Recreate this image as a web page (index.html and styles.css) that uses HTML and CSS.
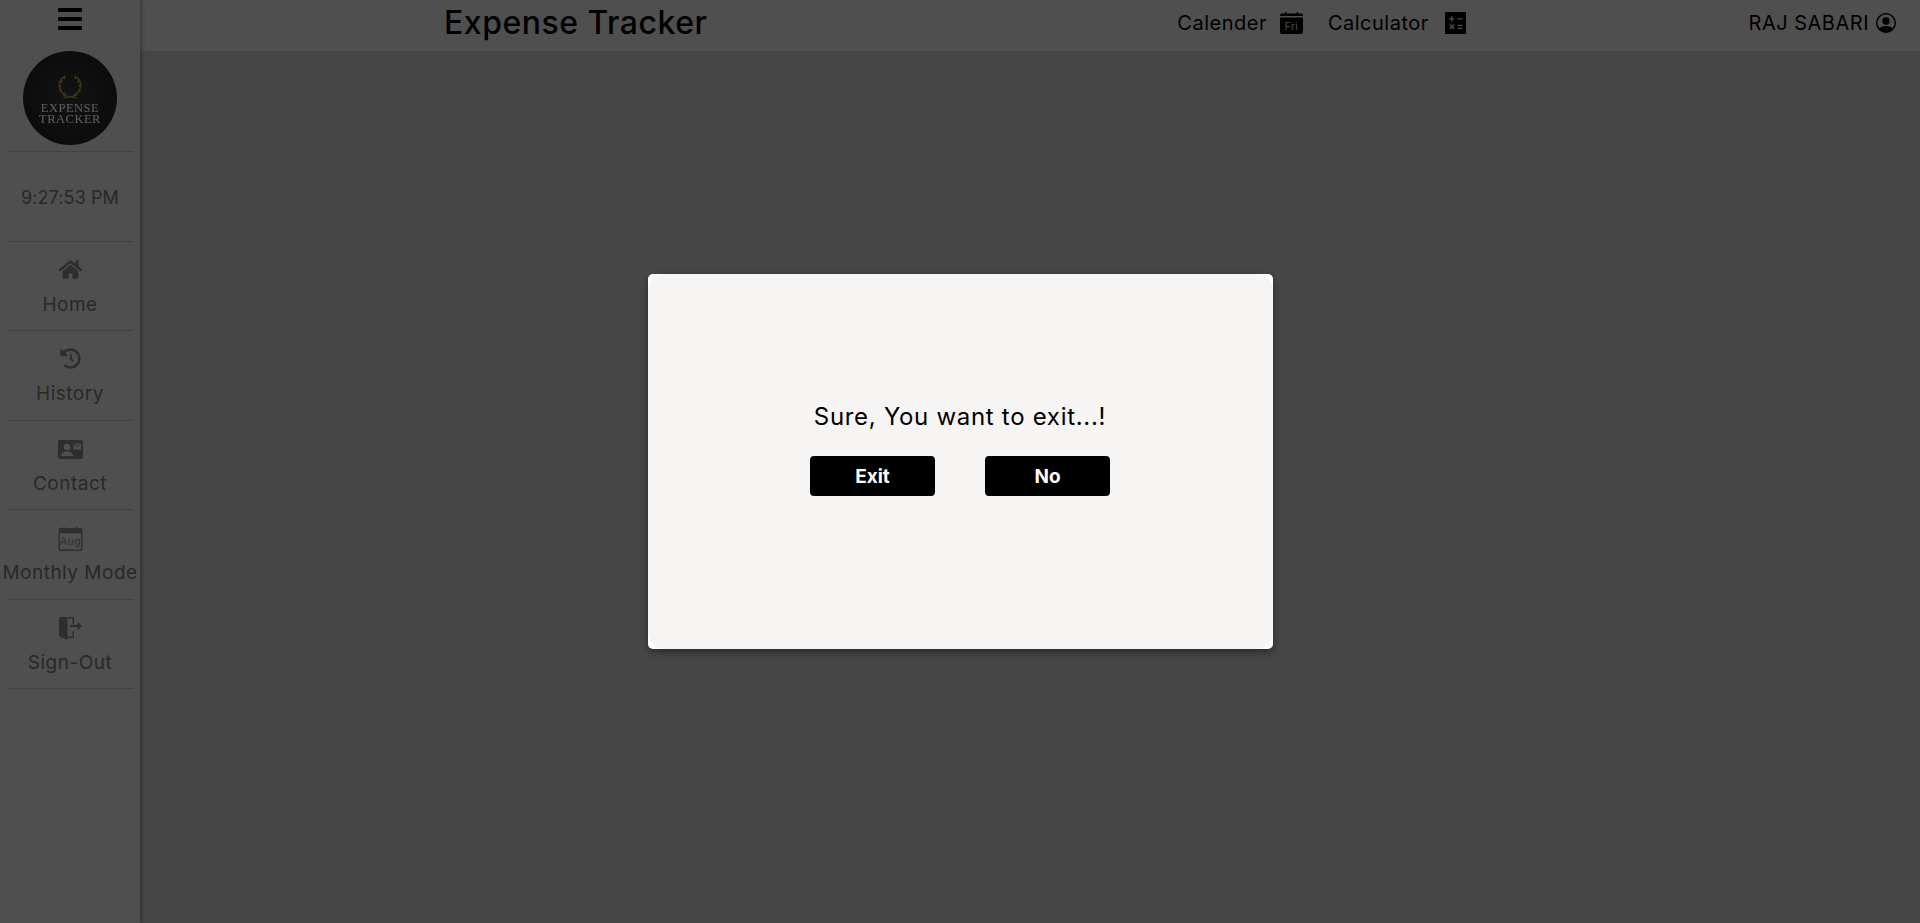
FILE: index.html
```html
<!DOCTYPE html>
<html lang="en">

<head>
    <meta charset="UTF-8">
    <meta name="viewport" content="width=device-width, initial-scale=1.0">
    <title>Expense Tracker</title>
    <link rel="stylesheet" href="styles.css">
</head>

<body>
    <div class="app">
        <aside class="sidebar">
            <div class="menu-btn">
                <svg class="bars" viewBox="0 0 24 22" aria-hidden="true">
                    <rect x="0" y="0" width="24" height="4" rx="1"/>
                    <rect x="0" y="9" width="24" height="4" rx="1"/>
                    <rect x="0" y="18" width="24" height="4" rx="1"/>
                </svg>
            </div>
            <div class="logo-wrap">
                <div class="logo">
                    <svg class="wreath" viewBox="1.500 0 23 24" preserveAspectRatio="none" aria-hidden="true">
                        <path d="M6.500 2C1.500 8 3 18 11 21.500M19.500 2C24.500 8 23 18 15 21.500M7 23L19 20.500M19 23L7 20.500" fill="none" stroke="#43361a" stroke-width="1"/>
                        <path d="M6 3l3-3-.5 4.500zM3.500 7L6 3.500 6.500 8zM2.500 12L4 8l1.500 4zM4 17l-.5-4 3 3zM8 20.500l-3-3 4 .5zM20 3l-3-3 .5 4.500zM22.500 7L20 3.500 19.500 8zM23.500 12L22 8l-1.500 4zM22 17l.5-4-3 3zM18 20.500l3-3-4 .5z" fill="#43361a"/>
                    </svg>
                    <span class="logo-text">EXPENSE</span>
                    <span class="logo-text">TRACKER</span>
                </div>
            </div>
            <div class="clock">9:27:53 PM</div>
            <nav class="side-nav">
                <a class="side-item">
                    <span class="side-icon">
                        <svg class="icon-home" viewBox="0 0 576 512" aria-hidden="true">
                            <path d="M280.370 148.260L96 300.110V464a16 16 0 0 0 16 16l112.060-.29a16 16 0 0 0 15.920-16V368a16 16 0 0 1 16-16h64a16 16 0 0 1 16 16v95.640a16 16 0 0 0 16 16.050L464 480a16 16 0 0 0 16-16V300L295.670 148.260a12.190 12.190 0 0 0-15.300 0zM571.600 251.470L488 182.560V44.050a12 12 0 0 0-12-12h-56a12 12 0 0 0-12 12v72.610L318.470 43a48 48 0 0 0-61 0L4.340 251.470a12 12 0 0 0-1.600 16.900l25.500 31A12 12 0 0 0 45.150 301l235.220-193.740a12.190 12.190 0 0 1 15.300 0L530.900 301a12 12 0 0 0 16.900-1.600l25.500-31a12 12 0 0 0-1.700-16.930z"/>
                        </svg>
                    </span>
                    <span>Home</span>
                </a>
                <a class="side-item">
                    <span class="side-icon">
                        <svg class="icon-history" viewBox="0 0 512 512" aria-hidden="true">
                            <path d="M504 255.531c.253 136.640-111.180 248.372-247.820 248.468-59.015.042-113.223-20.530-155.822-54.911-11.077-8.940-11.905-25.541-1.839-35.607l11.267-11.267c8.609-8.609 22.353-9.551 31.891-1.984C173.062 425.135 212.781 440 256 440c101.705 0 184-82.311 184-184 0-101.705-82.311-184-184-184-48.814 0-93.149 18.969-126.068 49.932l50.754 50.754c10.080 10.080 2.941 27.314-11.313 27.314H24c-8.837 0-16-7.163-16-16V38.627c0-14.254 17.234-21.393 27.314-11.314l49.372 49.372C129.209 31.084 189.552 8 256 8c136.810 0 247.747 110.780 248 247.531zm-180.912 78.784l11.314-11.314c6.248-6.248 6.248-16.379 0-22.627L288 254.059V152c0-8.837-7.163-16-16-16h-16c-8.837 0-16 7.163-16 16v122.059l55.687 55.686c6.248 6.248 16.379 6.248 22.627.001z"/>
                        </svg>
                    </span>
                    <span>History</span>
                </a>
                <a class="side-item">
                    <span class="side-icon icon-low">
                        <svg class="icon-contact" viewBox="0 0 25 19" aria-hidden="true">
                            <path fill-rule="evenodd" d="M2 0h21a2 2 0 0 1 2 2v15a2 2 0 0 1-2 2H2a2 2 0 0 1-2-2V2a2 2 0 0 1 2-2zm13.500 3.500v6H23v-6z"/>
                            <circle class="cut" cx="9" cy="7" r="3.200"/>
                            <path class="cut" d="M3 16c0-3 2.500-4.500 6-4.500s6 1.500 6 4.500z"/>
                            <path d="M16 4l3.200 2.500L22.500 4" fill="none" stroke="#949494" stroke-width="1"/>
                        </svg>
                    </span>
                    <span>Contact</span>
                </a>
                <a class="side-item">
                    <span class="side-icon">
                        <svg class="icon-month" viewBox="0 0 25 25" aria-hidden="true">
                            <path fill-rule="evenodd" d="M2 1h3V0h1.500v1h12V0H20v1h3a2 2 0 0 1 2 2v20a2 2 0 0 1-2 2H2a2 2 0 0 1-2-2V3a2 2 0 0 1 2-2zm-.500 5.500v16c0 .6.400 1 1 1h20c.6 0 1-.4 1-1v-16z"/>
                            <text class="month" x="12.500" y="18.500" text-anchor="middle">Aug</text>
                        </svg>
                    </span>
                    <span>Monthly Mode</span>
                </a>
                <a class="side-item">
                    <span class="side-icon">
                        <svg class="icon-door" viewBox="0 0 23 23" aria-hidden="true">
                            <path d="M0 1.500L1 0h7.500v23L1 20 0 19z"/>
                            <path d="M8.500 0H15v7h-1.500V1.500h-5zM8.500 19.500h5V14H15v7H8.500z"/>
                            <path d="M11 7.700h7.500V4.500L23 9l-4.500 4.500v-3.200H11z"/>
                        </svg>
                    </span>
                    <span>Sign-Out</span>
                </a>
            </nav>
        </aside>

        <div class="page">
            <header class="topbar">
                <h1 class="brand">Expense Tracker</h1>
                <div class="tools">
                    <a class="tool">
                        <span>Calender</span>
                        <svg class="tool-cal" viewBox="0 0 23 22" aria-hidden="true">
                            <path fill-rule="evenodd" d="M2 1.500h3V0h1.500v1.500h10V0H18v1.500h3a2 2 0 0 1 2 2V4H0v-.500a2 2 0 0 1 2-2zM0 5.500h23V20a2 2 0 0 1-2 2H2a2 2 0 0 1-2-2z"/>
                            <text class="day" x="11.500" y="18" text-anchor="middle">Fri</text>
                        </svg>
                    </a>
                    <a class="tool">
                        <span>Calculator</span>
                        <svg class="tool-calc" viewBox="0 0 21 22" aria-hidden="true">
                            <path fill-rule="evenodd" d="M0 0h21v22H0zM6 4.200v2H4v1.400h2v2h1.400v-2h2V6.200h-2v-2zM12.500 6.200v1.400h5V6.200zM4.500 13l1.600 1.800-1.600 1.800 1 .9 1.600-1.700 1.500 1.700 1-.9-1.600-1.800L9.600 13l-1-.9-1.500 1.700-1.600-1.700zM12.500 12.700v1.400h5v-1.400zM12.500 15.700v1.400h5v-1.400z"/>
                        </svg>
                    </a>
                </div>
                <div class="user">
                    <span>RAJ SABARI</span>
                    <svg class="user-icon" viewBox="0 0 20 20" aria-hidden="true">
                        <path fill-rule="evenodd" d="M10 0a10 10 0 1 0 0 20 10 10 0 0 0 0-20zm0 1.600a8.400 8.400 0 0 1 6.500 13.700C15 13.800 12.700 13 10 13s-5 .8-6.500 2.300A8.400 8.400 0 0 1 10 1.600z"/>
                        <circle cx="10" cy="8" r="3.700"/>
                    </svg>
                </div>
            </header>
            <main class="content"></main>
        </div>
    </div>

    <div class="overlay">
        <div class="dialog">
            <div class="dialog-inner">
                <p class="dialog-msg">Sure, You want to exit...!</p>
                <div class="dialog-actions">
                    <button class="btn" type="button">Exit</button>
                    <button class="btn" type="button">No</button>
                </div>
            </div>
        </div>
    </div>
</body>

</html>
```

FILE: styles.css
```css
* {
    box-sizing: border-box;
}

html,
body {
    height: 100%;
    margin: 0;
    overflow: hidden;
}

body {
    background-color: #e2e2e2;
    color: #000;
    font-family: Inter, "Open Sans", "Liberation Sans", sans-serif;
}

.app {
    display: flex;
    height: 100%;
}

.sidebar {
    background-color: #ffffff;
    box-shadow: 2px 0 4px rgba(0, 0, 0, 0.3);
    flex: 0 0 140px;
    min-width: 0;
    position: relative;
}

.menu-btn {
    display: flex;
    height: 51px;
    justify-content: center;
    padding-top: 8px;
}

.bars {
    fill: #000;
    height: 22px;
    width: 24px;
}

.logo-wrap {
    border-bottom: 1px solid #d6d6d6;
    display: flex;
    height: 101px;
    justify-content: center;
    margin: 0 7px;
}

/* logo stays bright through the dialog overlay, same as the real app */
.logo {
    align-items: center;
    background-color: #050505;
    background-image: radial-gradient(circle, #131313 0%, #090909 100%);
    border-radius: 50%;
    display: flex;
    filter: blur(0.4px);
    flex-direction: column;
    height: 94px;
    padding-top: 24px;
    position: relative;
    width: 94px;
    z-index: 11;
}

.wreath {
    height: 24px;
    margin-bottom: 4px;
    width: 26px;
}

.logo-text {
    color: #626262;
    font-family: "Liberation Serif", serif;
    font-size: 12.5px;
    letter-spacing: 0.5px;
    line-height: 11px;
}

.clock {
    align-items: center;
    border-bottom: 1px solid #d6d6d6;
    color: #828282;
    display: flex;
    font-size: 18px;
    height: 89.5px;
    justify-content: center;
    letter-spacing: 0.1px;
    margin: 0 7px;
    padding-top: 2px;
}

.side-item {
    align-items: center;
    border-bottom: 1px solid #d6d6d6;
    color: #828282;
    display: flex;
    flex-direction: column;
    font-size: 19px;
    height: 89.6px;
    letter-spacing: 0.5px;
    line-height: 24px;
    margin: 0 7px;
    padding-top: 17px;
    white-space: nowrap;
}

.side-icon {
    display: block;
    flex: 0 0 25px;
    margin-bottom: 9px;
}

.icon-low {
    padding-top: 2px;
}

.side-icon svg {
    display: block;
    fill: #949494;
}

.icon-home {
    height: 21px;
    width: 25px;
}

.icon-history {
    height: 21px;
    width: 21px;
}

.icon-contact {
    height: 19px;
    width: 25px;
}

.icon-month {
    height: 24px;
    width: 25px;
}

.icon-door {
    height: 23px;
    width: 23px;
}

.side-icon .cut {
    fill: #fff;
}

.side-icon .month {
    fill: #949494;
    font-size: 11px;
}

.page {
    display: flex;
    flex: 1;
    flex-direction: column;
    min-width: 0;
}

.topbar {
    align-items: center;
    background-color: #fff;
    border-bottom: 1px solid #dcdcdc;
    display: flex;
    flex: 0 0 52px;
    padding-bottom: 6px;
    padding-left: 304px;
    padding-right: 24px;
}

.brand {
    font-size: 32px;
    font-weight: 500;
    letter-spacing: 0.5px;
    margin: 0;
}

.tools {
    align-items: center;
    display: flex;
    gap: 25px;
    margin-left: 470px;
}

.tool,
.user {
    align-items: center;
    display: flex;
    font-size: 20px;
    letter-spacing: 0.5px;
}

.tool svg {
    fill: #000;
    margin-left: 13px;
}

.tool-cal {
    height: 22px;
    width: 23px;
}

.tool .tool-calc {
    height: 22px;
    margin-left: 16px;
    width: 21px;
}

.tool .day {
    fill: #fff;
    font-size: 10px;
}

.user {
    margin-left: auto;
}

.user-icon {
    fill: #000;
    height: 20px;
    margin-left: 7px;
    width: 20px;
}

.content {
    flex: 1;
}

.overlay {
    align-items: center;
    background-color: rgba(0, 0, 0, 0.69);
    display: flex;
    inset: 0;
    justify-content: center;
    position: fixed;
    z-index: 10;
}

.dialog {
    background-color: #fff;
    border-radius: 5px;
    box-shadow: 0 3px 8px rgba(0, 0, 0, 0.45);
    height: 375px;
    width: 625px;
}

.dialog-inner {
    align-items: center;
    background-color: #f7f5f3;
    border-radius: 16px;
    display: flex;
    flex-direction: column;
    height: 100%;
    padding-top: 125px;
}

.dialog-msg {
    font-size: 24px;
    letter-spacing: 0.7px;
    line-height: 36px;
    margin: 0 0 21px;
}

.dialog-actions {
    display: flex;
    gap: 50px;
}

.btn {
    background-color: #000;
    border: 0;
    border-radius: 4px;
    color: #fff;
    font-family: inherit;
    font-size: 19px;
    font-weight: 700;
    height: 40px;
    width: 125px;
}
```
